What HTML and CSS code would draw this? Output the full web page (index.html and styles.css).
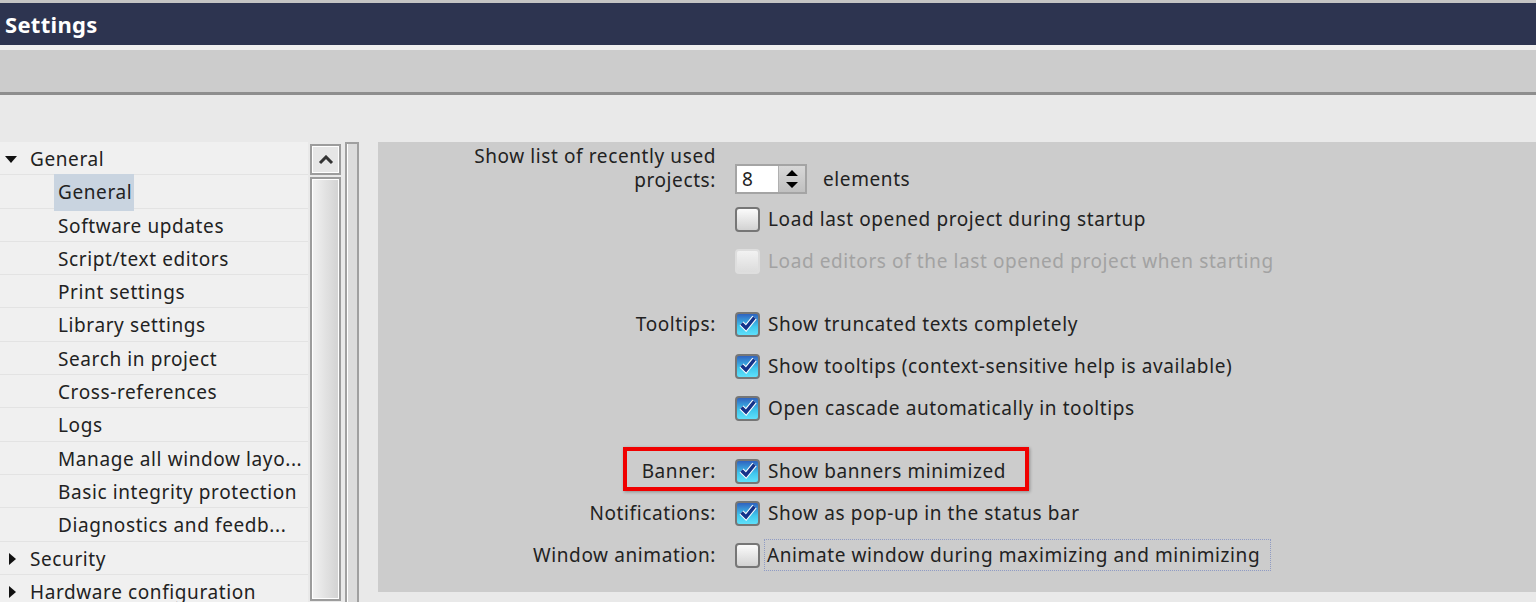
FILE: index.html
```html
<!DOCTYPE html>
<html lang="en">
<head>
  <meta charset="UTF-8" />
  <title>Settings</title>
  <link rel="stylesheet" href="styles.css">
</head>
<body>

<div class="titlebar">Settings</div>
<div class="strip"></div>
<div class="toolbar"></div>
<div class="spacer"></div>

<div class="main">
  <div class="tree">
    <div class="node"><span class="arrow down"></span>General</div>
    <div class="node sub"><span class="selected">General</span></div>
    <div class="node sub">Software updates</div>
    <div class="node sub">Script/text editors</div>
    <div class="node sub">Print settings</div>
    <div class="node sub">Library settings</div>
    <div class="node sub">Search in project</div>
    <div class="node sub">Cross-references</div>
    <div class="node sub">Logs</div>
    <div class="node sub">Manage all window layo...</div>
    <div class="node sub">Basic integrity protection</div>
    <div class="node sub">Diagnostics and feedb...</div>
    <div class="node"><span class="arrow right"></span>Security</div>
    <div class="node"><span class="arrow right"></span>Hardware configuration</div>
  </div>

  <div class="scrollbar">
    <div class="scroll-up">
      <svg width="16" height="10" viewBox="0 0 16 10"><path d="M2 8 L8 2 L14 8" fill="none" stroke="#333" stroke-width="3"/></svg>
    </div>
    <div class="scroll-track"></div>
  </div>
  <div class="splitter"></div>

  <div class="panel">
    <div class="row first">
      <div class="label">Show list of recently used<br>projects:</div>
      <div class="spinner">
        <div class="spin-value">8</div>
        <div class="spin-buttons">
          <svg width="16" height="22" viewBox="0 0 16 22"><path d="M2 8 L8 2 L14 8 Z M2 14 L8 20 L14 14 Z" fill="#000"/></svg>
        </div>
      </div>
      <div class="unit">elements</div>
    </div>

    <div class="row">
      <div class="label"></div>
      <span class="box"></span><span class="text">Load last opened project during startup</span>
    </div>
    <div class="row disabled">
      <div class="label"></div>
      <span class="box"></span><span class="text">Load editors of the last opened project when starting</span>
    </div>

    <div class="row gap">
      <div class="label">Tooltips:</div>
      <span class="box checked"><svg width="18" height="18" viewBox="0 0 18 18"><path d="M2.5 8.5 L7 13 L15.5 2.5" fill="none" stroke="#fff" stroke-width="5.5"/><path d="M2.5 8.5 L7 13 L15.5 2.5" fill="none" stroke="#14338a" stroke-width="3.5"/></svg></span>
      <span class="text">Show truncated texts completely</span>
    </div>
    <div class="row">
      <div class="label"></div>
      <span class="box checked"><svg width="18" height="18" viewBox="0 0 18 18"><path d="M2.5 8.5 L7 13 L15.5 2.5" fill="none" stroke="#fff" stroke-width="5.5"/><path d="M2.5 8.5 L7 13 L15.5 2.5" fill="none" stroke="#14338a" stroke-width="3.5"/></svg></span>
      <span class="text">Show tooltips (context-sensitive help is available)</span>
    </div>
    <div class="row">
      <div class="label"></div>
      <span class="box checked"><svg width="18" height="18" viewBox="0 0 18 18"><path d="M2.5 8.5 L7 13 L15.5 2.5" fill="none" stroke="#fff" stroke-width="5.5"/><path d="M2.5 8.5 L7 13 L15.5 2.5" fill="none" stroke="#14338a" stroke-width="3.5"/></svg></span>
      <span class="text">Open cascade automatically in tooltips</span>
    </div>

    <div class="row gap banner">
      <div class="label">Banner:</div>
      <span class="box checked"><svg width="18" height="18" viewBox="0 0 18 18"><path d="M2.5 8.5 L7 13 L15.5 2.5" fill="none" stroke="#fff" stroke-width="5.5"/><path d="M2.5 8.5 L7 13 L15.5 2.5" fill="none" stroke="#14338a" stroke-width="3.5"/></svg></span>
      <span class="text">Show banners minimized</span>
      <div class="highlight"></div>
    </div>
    <div class="row">
      <div class="label">Notifications:</div>
      <span class="box checked"><svg width="18" height="18" viewBox="0 0 18 18"><path d="M2.5 8.5 L7 13 L15.5 2.5" fill="none" stroke="#fff" stroke-width="5.5"/><path d="M2.5 8.5 L7 13 L15.5 2.5" fill="none" stroke="#14338a" stroke-width="3.5"/></svg></span>
      <span class="text">Show as pop-up in the status bar</span>
    </div>
    <div class="row">
      <div class="label">Window animation:</div>
      <span class="box"></span><span class="text focus">Animate window during maximizing and minimizing</span>
    </div>
  </div>
</div>

</body>
</html>
```

FILE: styles.css
```css
body {
  margin: 0;
  background: #e9e9e9;
  font-family: 'Noto Sans', sans-serif;
  font-size: 19px;
  letter-spacing: 0.6px;
  color: #222;
  overflow: hidden;
}
.titlebar {
  height: 42px;
  border-top: 3px solid #c4c4c4;
  background: #2d3450;
  color: #fff;
  font-weight: bold;
  font-size: 22px;
  letter-spacing: 0.3px;
  line-height: 42px;
  padding-left: 5px;
}
.strip {
  height: 5px;
  background: #efefef;
}
.toolbar {
  height: 42px;
  background: #cccccc;
  border-bottom: 3px solid #8e8e8e;
}
.spacer {
  height: 47px;
}
.main {
  display: flex;
  height: 460px;
}
.tree {
  width: 308px;
  background: #f0f0f0;
}
.node {
  height: 33.3px;
  box-sizing: border-box;
  border-bottom: 1px solid #e3e3e3;
  line-height: 34px;
  padding-left: 30px;
  position: relative;
  white-space: nowrap;
}
.node.sub {
  padding-left: 58px;
}
.selected {
  background: #c9d4e0;
  padding: 5px 2px 6px 4px;
  margin-left: -4px;
}
.arrow {
  position: absolute;
  width: 0;
  height: 0;
}
.arrow.down {
  border-left: 6px solid transparent;
  border-right: 6px solid transparent;
  border-top: 7px solid #111;
  left: 5px;
  top: 14px;
}
.arrow.right {
  border-top: 6px solid transparent;
  border-bottom: 6px solid transparent;
  border-left: 7px solid #111;
  left: 9px;
  top: 11px;
}
.scrollbar {
  width: 35px;
  padding-left: 2px;
  padding-top: 2px;
}
.scroll-up {
  width: 27px;
  height: 27px;
  border: 2px solid #9c9c9c;
  box-shadow: inset 0 0 0 1px #fff;
  background: #e6e6e6;
  display: flex;
  align-items: center;
  justify-content: center;
}
.scroll-track {
  width: 27px;
  height: 420px;
  margin-top: 2px;
  border: 2px solid #9c9c9c;
  box-shadow: inset 0 0 0 1px #fff;
  background: linear-gradient(to right, #f2f2f2, #d2d2d2);
}
.splitter {
  width: 10px;
  border: 2px solid #a0a0a0;
  border-bottom: none;
  box-shadow: inset 1px 0 0 #fff;
  background: #dcdcdc;
}
.panel {
  flex: 1;
  margin-left: 19px;
  height: 450px;
  background: #cccccc;
}
.row {
  display: flex;
  align-items: center;
  height: 42px;
  position: relative;
  white-space: nowrap;
}
.row.first {
  height: 56px;
  align-items: flex-end;
}
.row.gap {
  margin-top: 21px;
}
.label {
  width: 338px;
  flex: none;
  text-align: right;
  margin-right: 19px;
  line-height: 24px;
}
.row.first .label {
  margin-bottom: 6px;
}
.spinner {
  display: flex;
  width: 68px;
  height: 26px;
  border: 2px solid #a4a4a4;
  margin-bottom: 4px;
}
.spin-value {
  width: 41px;
  background: #fff;
  line-height: 26px;
  padding-left: 5px;
  box-sizing: border-box;
}
.spin-buttons {
  flex: 1;
  background: linear-gradient(#d8d8d8, #c0c0c0);
  border-left: 1px solid #b0b0b0;
  display: flex;
  align-items: center;
  justify-content: center;
}
.unit {
  margin-left: 16px;
  margin-bottom: 7px;
  line-height: 24px;
}
.box {
  width: 21px;
  height: 21px;
  flex: none;
  border: 2px solid #767676;
  border-radius: 4px;
  background: linear-gradient(#fbfbfb, #d2d2d2);
  display: flex;
  align-items: center;
  justify-content: center;
  margin-right: 8px;
}
.box.checked {
  background: linear-gradient(#2f63c0, #40c8ee 60%, #5fe0fa);
}
.disabled .box {
  border-color: #dedede;
  background: linear-gradient(#f2f2f2, #dcdcdc);
}
.disabled .text {
  color: #a2a2a2;
}
.text.focus {
  outline: 1px dotted #8f9bc4;
  padding: 2px 10px 2px 2px;
  margin-left: -3px;
}
.highlight {
  position: absolute;
  left: 245px;
  top: -3px;
  width: 398px;
  height: 36px;
  border: 4px solid #f00000;
  box-shadow: 1px 1px 3px rgba(0, 0, 0, 0.3);
}
```
